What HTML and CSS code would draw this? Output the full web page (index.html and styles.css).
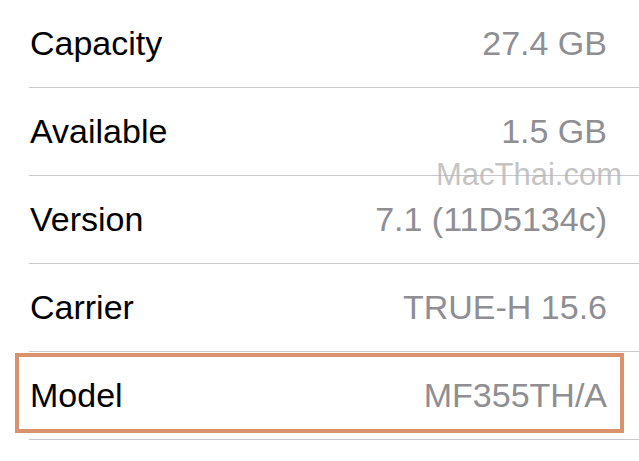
FILE: index.html
```html
<!DOCTYPE html>
<html lang="en">
<head>
  <meta charset="UTF-8" />
  <meta name="viewport" content="width=device-width, initial-scale=1.0" />
  <title>About</title>
  <link rel="stylesheet" href="styles.css">
</head>
<body>
  <div class="list">
    <div class="row">
      <span class="label">Capacity</span>
      <span class="value">27.4 GB</span>
    </div>
    <div class="row">
      <span class="label">Available</span>
      <span class="value">1.5 GB</span>
    </div>
    <div class="row">
      <span class="label">Version</span>
      <span class="value">7.1 (11D5134c)</span>
    </div>
    <div class="row">
      <span class="label">Carrier</span>
      <span class="value">TRUE-H 15.6</span>
    </div>
    <div class="row">
      <span class="label">Model</span>
      <span class="value">MF355TH/A</span>
      <div class="highlight"></div>
    </div>
    <div class="watermark">MacThai.com</div>
  </div>
</body>
</html>
```

FILE: styles.css
```css
html, body {
  margin: 0;
  background: #fff;
}
body {
  font-family: "Liberation Sans", Arial, sans-serif;
  width: 639px;
  height: 461px;
  overflow: hidden;
}
.list {
  position: relative;
}
.row {
  position: relative;
  display: flex;
  align-items: center;
  justify-content: space-between;
  height: 87px;
  margin-left: 29px;
  padding: 0 32px 0 1px;
  border-bottom: 1px solid #c8c7cc;
  font-size: 34px;
}
.label {
  color: #000;
}
.value {
  color: #8e8e93;
}
.highlight {
  position: absolute;
  left: -14px;
  top: 1px;
  width: 601px;
  height: 72px;
  border: 4px solid #da926e;
}
.watermark {
  position: absolute;
  left: 436px;
  top: 157px;
  font-size: 31px;
  color: rgba(180, 180, 180, 0.8);
}
```
